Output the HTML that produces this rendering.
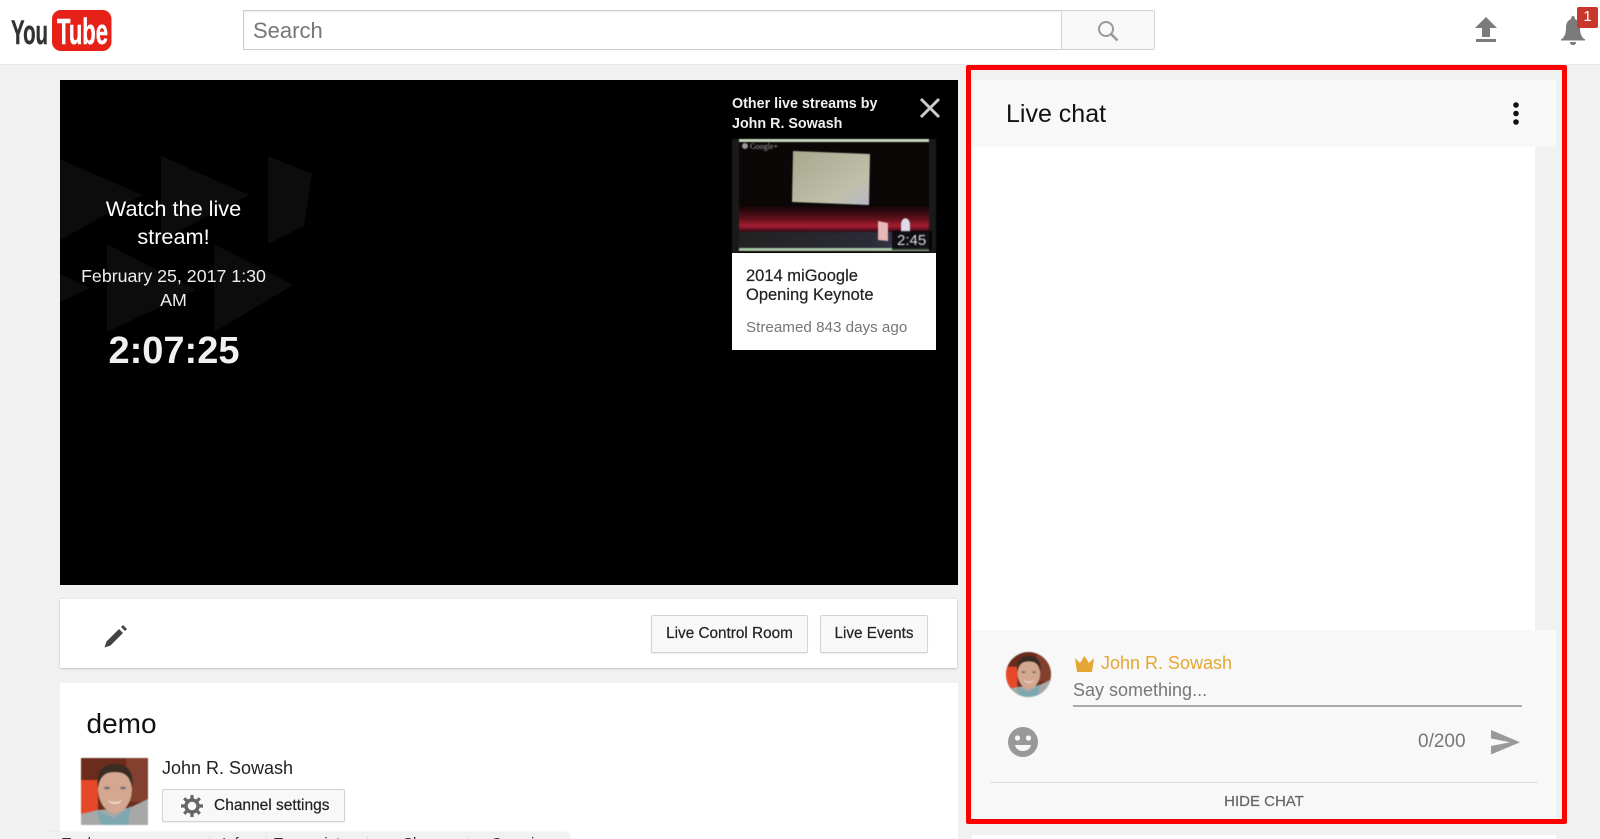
<!DOCTYPE html>
<html><head><meta charset="utf-8"><title>Live chat</title>
<style>
*{box-sizing:border-box}
html,body{margin:0;padding:0;width:1600px;height:839px;overflow:hidden;background:#f1f1f1;font-family:"Liberation Sans",sans-serif;color:#222}
#w{position:absolute;left:0;top:0;width:1600px;height:839px;overflow:hidden;background:#f1f1f1}
.a{position:absolute}
.t{position:absolute;white-space:nowrap;line-height:1}
.btn{position:absolute;background:#f8f8f8;border:1px solid #d3d3d3;border-radius:2px;box-shadow:0 1px 1px rgba(0,0,0,.08);font-size:15px;color:#222;text-align:center;-webkit-text-stroke:.2px #222}
</style></head><body><div id="w">
<!-- header -->
<div class="a" style="left:0;top:0;width:1600px;height:65px;background:#fff;border-bottom:1px solid #e8e8e8"></div>
<svg class="a" style="left:0;top:0" width="130" height="65">
<text x="11" y="44" font-family="Liberation Sans Narrow,Liberation Sans,sans-serif" font-weight="700" font-size="34" fill="#333" stroke="#333" stroke-width=".4" textLength="37" lengthAdjust="spacingAndGlyphs">You</text>
<rect x="52" y="10" width="59.5" height="41" rx="9" fill="#e62117"/>
<text x="57" y="44" font-family="Liberation Sans Narrow,Liberation Sans,sans-serif" font-weight="700" font-size="36" fill="#fff" stroke="#fff" stroke-width=".5" textLength="51" lengthAdjust="spacingAndGlyphs">Tube</text>
</svg>
<div class="a" style="left:243px;top:10px;width:819px;height:40px;background:#fff;border:1px solid #ccc;box-shadow:inset 0 1px 1px #eee"></div>
<div class="t" style="left:253px;top:20px;font-size:22px;color:#777">Search</div>
<div class="a" style="left:1061px;top:10px;width:94px;height:40px;background:#f8f8f8;border:1px solid #d3d3d3;border-radius:0 2px 2px 0"></div>
<svg class="a" style="left:1096px;top:19px" width="24" height="24"><circle cx="10" cy="10" r="7" fill="none" stroke="#999" stroke-width="2"/><path d="M15 15l6.5 6.5" stroke="#999" stroke-width="2.6"/></svg>
<svg class="a" style="left:1474px;top:16px" width="24" height="28"><path d="M12 1L23 12H16V21H8V12H1Z" fill="#7b7b7b"/><rect x="2" y="23" width="20" height="3" fill="#7b7b7b"/></svg>
<svg class="a" style="left:1558px;top:12px" width="30" height="34"><path d="M4 27c3-3 4-6 4-12 0-5 3-7 5-8 0-2 1-3 2-3s2 1 2 3c2 1 5 3 5 8 0 6 1 9 4 12Z" fill="#7b7b7b"/><rect x="3" y="27" width="24" height="1.5" fill="#7b7b7b"/><path d="M12 30h6c0 2-1 3-3 3s-3-1-3-3Z" fill="#7b7b7b"/></svg>
<div class="a" style="left:1577px;top:7px;width:21px;height:21px;background:#c9372c;border-radius:2px;color:#fff;font-size:15px;text-align:center;line-height:20px">1</div>

<!-- video -->
<div class="a" style="left:60px;top:80px;width:898px;height:505px;background:#000"></div>
<svg class="a" style="left:60px;top:80px" width="300" height="300" fill="#0c0c0c">
<path d="M0 79L82 115 0 160Z"/><path d="M101 76L189 115 101 160Z"/><path d="M208 76L252 94 244 146 208 164Z"/>
<path d="M0 194L30 208 0 222Z"/><path d="M47 164L136 210 47 252Z"/><path d="M154 164L233 205 154 252Z"/>
</svg>
<div class="a" style="left:72px;top:195px;width:203px;text-align:center;color:#fff;font-size:21.7px;line-height:28px">Watch the live stream!</div>
<div class="a" style="left:72px;top:264px;width:203px;text-align:center;color:#eee;font-size:17.8px;line-height:24px">February 25, 2017 1:30 AM</div>
<div class="t" style="left:72px;top:332px;width:204px;text-align:center;color:#f1f1f1;font-size:38px;font-weight:700">2:07:25</div>

<div class="a" style="left:732px;top:94px;font-size:14.3px;font-weight:700;line-height:20px;white-space:nowrap;color:#f0f0f0">Other live streams by<br>John R. Sowash</div>
<svg class="a" style="left:919px;top:97px" width="22" height="22"><path d="M2 2L20 20M20 2L2 20" stroke="#ccc" stroke-width="3"/></svg>
<svg class="a" style="left:732px;top:139px;filter:blur(.4px)" width="204" height="114">
<rect width="204" height="114" fill="#0a0706"/>
<rect width="7" height="114" fill="#1a1a1a"/><rect x="197" width="7" height="114" fill="#1a1a1a"/>
<rect x="7" y="0" width="190" height="3" fill="#c8d8c0"/>
<defs><linearGradient id="c" x1="0" y1="0" x2="0" y2="1"><stop offset="0" stop-color="#0b0505"/><stop offset=".5" stop-color="#5c101a"/><stop offset=".78" stop-color="#a81c32"/><stop offset="1" stop-color="#2a0a10"/></linearGradient><linearGradient id="s" x1="0" y1="0" x2="1" y2="1"><stop offset="0" stop-color="#a8a88e"/><stop offset=".7" stop-color="#c0c0aa"/><stop offset="1" stop-color="#b8b8c8"/></linearGradient><linearGradient id="f" x1="0" y1="0" x2="1" y2="0"><stop offset="0" stop-color="#222"/><stop offset=".7" stop-color="#2c2c38"/><stop offset="1" stop-color="#444466"/></linearGradient></defs>
<rect x="7" y="66" width="190" height="27" fill="url(#c)"/>
<path d="M61 12L138 15 137 66 60 63Z" fill="url(#s)"/>
<rect x="7" y="93" width="190" height="16" fill="url(#f)"/>
<path d="M146 82L156 84 156 102 146 101Z" fill="#e8b8b8"/>
<path d="M169 86c0-9 9-9 9 0v7h-9Z" fill="#dcdcec"/>
<rect x="7" y="109" width="190" height="3" fill="#a8c8a8"/>
<circle cx="13" cy="7" r="3" fill="#999"/>
<text x="18" y="10" font-size="8" font-family="Liberation Serif,serif" fill="#aaa">Google+</text>
<rect x="160" y="92" width="40" height="19" fill="#000" opacity=".75"/>
<text x="165" y="106" font-size="15" font-family="Liberation Sans,sans-serif" fill="#ddd">2:45</text>
</svg>
<div class="a" style="left:732px;top:253px;width:204px;height:97px;background:#fff"></div>
<div class="a" style="left:746px;top:267px;font-size:16.5px;line-height:19.4px;color:#222;white-space:nowrap;-webkit-text-stroke:.2px #222">2014 miGoogle<br>Opening Keynote</div>
<div class="t" style="left:746px;top:320px;font-size:15.2px;color:#767676">Streamed 843 days ago</div>

<!-- action bar -->
<div class="a" style="left:60px;top:599px;width:897px;height:69px;background:#fff;box-shadow:0 1px 2px rgba(0,0,0,.18),0 0 1px rgba(0,0,0,.12)"></div>
<svg class="a" style="left:103px;top:623px" width="26" height="26"><path d="M1.5 24.5L3.5 18.5 16 6 20 10 7.5 22.5Z" fill="#444"/><path d="M18 4L20 2 24 6 22 8Z" fill="#444"/></svg>
<div class="btn" style="left:651px;top:615px;width:157px;height:38px;line-height:36px;font-size:15.3px">Live Control Room</div>
<div class="btn" style="left:820px;top:615px;width:108px;height:38px;line-height:36px;font-size:15.3px">Live Events</div>

<!-- demo card -->
<div class="a" style="left:60px;top:683px;width:898px;height:156px;background:#fff"></div>
<div class="t" style="left:86.5px;top:710px;font-size:28px;color:#111">demo</div>
<svg class="a" style="left:81px;top:758px;filter:blur(.6px)" width="67" height="67" viewBox="0 0 67 67">
<rect width="67" height="67" fill="#6b2c1c"/><rect x="45" y="0" width="22" height="44" fill="#84402e"/>
<rect x="0" y="22" width="17" height="34" fill="#e8482a"/>
<path d="M0 56L17 52 48 50 67 41V67H0Z" fill="#a8a8a8"/>
<path d="M15 52L33 60 50 48 47 67H20Z" fill="#7ea8b0"/>
<ellipse cx="34" cy="31" rx="17" ry="24" fill="#d4a890"/>
<path d="M17 30C14 10 25 6 34 6S54 10 51 30C49 17 43 14 34 14S19 17 17 30Z" fill="#3a2c24"/>
<path d="M27 42c4 3 10 3 14 0-2 5-12 5-14 0Z" fill="#f4e8e0"/>
<ellipse cx="26" cy="30" rx="3" ry="1.3" fill="#6a6a6a"/><ellipse cx="42" cy="30" rx="3" ry="1.3" fill="#6a6a6a"/>
</svg>
<div class="t" style="left:162px;top:759px;font-size:18px;color:#222">John R. Sowash</div>
<div class="btn" style="left:162px;top:789px;width:183px;height:33px;line-height:31px;text-align:left;padding-left:51px;font-size:15.5px">Channel settings</div>
<svg class="a" style="left:181px;top:795px" width="22" height="22" viewBox="0 0 22 22"><circle cx="11" cy="11" r="6" fill="none" stroke="#666" stroke-width="3.4"/><g stroke="#666" stroke-width="3.2"><path d="M11 0v4M11 18v4M0 11h4M18 11h4M3.2 3.2l2.8 2.8M16 16l2.8 2.8M18.8 3.2L16 6M6 16l-2.8 2.8"/></g></svg>

<!-- tabs strip -->
<div class="a" style="left:50px;top:832px;width:521px;height:7px;background:#f1f1f1;border-radius:0 10px 0 0;box-shadow:0 -1px 1px rgba(0,0,0,.03)"></div>
<div class="t" style="left:62px;top:836px;font-size:15px;color:#333;letter-spacing:.5px">Tools</div>
<div class="t" style="left:222px;top:836px;font-size:15px;color:#333">Info</div>
<div class="t" style="left:274px;top:836px;font-size:15px;color:#333">Transcript</div>
<div class="t" style="left:403px;top:836px;font-size:15px;color:#333">Share</div>
<div class="t" style="left:491px;top:836px;font-size:15px;color:#333">Overview</div>
<div class="a" style="left:209px;top:836px;width:1px;height:3px;background:#ddd"></div>
<div class="a" style="left:266px;top:836px;width:1px;height:3px;background:#ddd"></div>
<div class="a" style="left:367px;top:836px;width:1px;height:3px;background:#ddd"></div>
<div class="a" style="left:467px;top:836px;width:1px;height:3px;background:#ddd"></div>

<!-- chat -->
<div class="a" style="left:972px;top:80px;width:584px;height:739px;background:#f8f8f8"></div>
<div class="a" style="left:972px;top:147px;width:563px;height:483px;background:#fff"></div>
<div class="a" style="left:1535px;top:147px;width:21px;height:483px;background:#f1f1f1"></div>
<div class="t" style="left:1006px;top:102px;font-size:25px;color:#111">Live chat</div>
<svg class="a" style="left:1511px;top:101px" width="10" height="26" fill="#111"><circle cx="5" cy="4" r="2.8"/><circle cx="5" cy="12.5" r="2.8"/><circle cx="5" cy="21" r="2.8"/></svg>

<svg class="a" style="left:1006px;top:652px;filter:blur(.4px)" width="45" height="45" viewBox="0 0 67 67">
<defs><clipPath id="cc"><circle cx="33.5" cy="33.5" r="33.5"/></clipPath></defs>
<g clip-path="url(#cc)"><rect width="67" height="67" fill="#6b2c1c"/><rect x="45" y="0" width="22" height="44" fill="#84402e"/><rect x="0" y="22" width="17" height="34" fill="#e8482a"/>
<path d="M0 56L17 52 48 50 67 41V67H0Z" fill="#a8a8a8"/><path d="M15 52L33 60 50 48 47 67H20Z" fill="#7ea8b0"/>
<ellipse cx="34" cy="31" rx="17" ry="24" fill="#d4a890"/><path d="M17 30C14 10 25 6 34 6S54 10 51 30C49 17 43 14 34 14S19 17 17 30Z" fill="#3a2c24"/>
<path d="M27 42c4 3 10 3 14 0-2 5-12 5-14 0Z" fill="#f4e8e0"/><ellipse cx="26" cy="30" rx="3" ry="1.3" fill="#6a6a6a"/><ellipse cx="42" cy="30" rx="3" ry="1.3" fill="#6a6a6a"/></g></svg>
<svg class="a" style="left:1074px;top:655px" width="21" height="18"><path d="M1 3L6 8 10.5 1 15 8 20 3 18 17H3Z" fill="#e4a733"/></svg>
<div class="t" style="left:1101px;top:654px;font-size:18px;color:#e4a733">John R. Sowash</div>
<div class="t" style="left:1073px;top:681px;font-size:18px;color:#777">Say something...</div>
<div class="a" style="left:1073px;top:705px;width:449px;height:1.5px;background:#aaa"></div>
<svg class="a" style="left:1007px;top:726px" width="32" height="32"><circle cx="16" cy="16" r="15" fill="#999"/><circle cx="10.5" cy="12" r="2.6" fill="#f8f8f8"/><circle cx="21.5" cy="12" r="2.6" fill="#f8f8f8"/><path d="M8 19h16c-1 4-4 6-8 6s-7-2-8-6Z" fill="#f8f8f8"/></svg>
<div class="t" style="left:1418px;top:732px;font-size:19px;color:#777">0/200</div>
<svg class="a" style="left:1491px;top:730px" width="30" height="25"><path d="M0 0L29 12.3 0 24.5V16L19 12.3 0 8.5Z" fill="#999"/></svg>
<div class="a" style="left:990px;top:782px;width:548px;height:1px;background:#e0e0e0"></div>
<div class="t" style="left:990px;top:794px;width:548px;text-align:center;font-size:15px;color:#666;-webkit-text-stroke:.2px #666">HIDE CHAT</div>
<div class="a" style="left:972px;top:835px;width:584px;height:4px;background:#fff"></div>

<!-- red highlight -->
<div class="a" style="left:966px;top:65px;width:601px;height:759px;border:5.5px solid #f00;border-radius:2px"></div>
</div></body></html>
